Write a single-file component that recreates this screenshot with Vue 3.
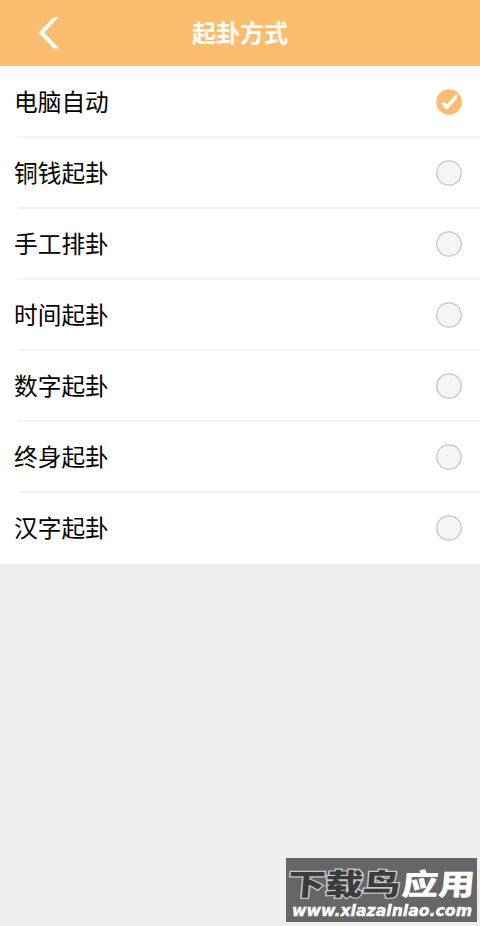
<template>
    <div class="page">
        <header class="header">
            <button class="btn-back" type="button" aria-label="返回">
                <svg width="22" height="34" viewBox="0 0 22 34">
                    <path d="M20.3 1.2H15.5L0.6 16.8L15.5 32.6H21.2L6.2 16.8Z" fill="#fff" />
                </svg>
            </button>
            <h1>起卦方式</h1>
        </header>

        <ul class="list">
            <li v-for="(item, index) in methods" :key="item" class="item" @click="selected = index">
                <span>{{ item }}</span>
                <svg v-if="selected === index" class="radio" width="26" height="26" viewBox="0 0 26 26">
                    <circle cx="13" cy="13" r="12.8" fill="#fbbe70" />
                    <path d="M5 14.2L8.6 12.9L11 15.2L19.4 6L21.2 5.2L20.8 9.6L12.4 19.6L9.8 20.4Z" fill="#fff" />
                </svg>
                <svg v-else class="radio" width="26" height="26" viewBox="0 0 26 26">
                    <circle cx="13" cy="13" r="12.2" fill="#f5f5f5" stroke="#c2c2c2" stroke-width="1.2" />
                </svg>
            </li>
        </ul>

        <svg class="watermark" width="191" height="64" viewBox="0 0 191 64">
            <rect width="191" height="64" fill="#666" />
            <g class="brand">
                <text class="brand-dark" transform="translate(1 37) skewX(-5) scale(1.27 1)">下载鸟</text>
                <text class="brand-light" transform="translate(115 37) skewX(-5) scale(1.24 1)">应用</text>
            </g>
            <text class="url" x="6" y="58" textLength="180" lengthAdjust="spacingAndGlyphs">www.xlazalnlao.com</text>
        </svg>
    </div>
</template>

<script setup>
import { ref } from 'vue';

const methods = ['电脑自动', '铜钱起卦', '手工排卦', '时间起卦', '数字起卦', '终身起卦', '汉字起卦'];
const selected = ref(0);
</script>

<style>
body {
    background-color: #eee;
}
</style>

<style scoped>
.page {
    position: relative;
    height: 926px;
    overflow: hidden;
    background-color: #eee;
    font-family: "Noto Sans CJK SC", sans-serif;
}

.header {
    display: grid;
    grid-template-columns: 80px 1fr 80px;
    align-items: center;
    height: 66px;
    background-color: #fbbe70;
}

.btn-back {
    display: flex;
    margin-left: 38px;
    padding: 0;
    border: 0;
    background: none;
    cursor: pointer;
}

h1 {
    margin: 0;
    padding-bottom: 3px;
    color: #fff;
    font-size: 24px;
    line-height: 36px;
    font-weight: bold;
    text-align: center;
}

.list {
    margin: 0;
    padding: 1px 0 0;
    list-style: none;
    background-color: #fff;
}

.item {
    display: flex;
    align-items: center;
    justify-content: space-between;
    box-sizing: border-box;
    height: 71px;
    padding: 0 18px 1px 14px;
    color: #000;
    font-size: 23.7px;
    cursor: pointer;
    background: linear-gradient(#f3f3f3, #f3f3f3) 18px 100% / 100% 2px no-repeat;
}

.item span {
    padding-bottom: 2px;
}

.item:last-child {
    background: none;
}

.radio {
    flex: none;
}

.watermark {
    position: absolute;
    left: 286px;
    top: 858px;
    overflow: visible;
}

.brand text {
    font-family: "Liberation Sans", "Noto Sans CJK SC", sans-serif;
    font-size: 29.5px;
    font-weight: 900;
    paint-order: stroke;
}

.brand-dark {
    fill: #3c3c3c;
    stroke: #c8c8c8;
    stroke-width: 2.4px;
}

.brand-light {
    fill: #fff;
}

.url {
    fill: #fff;
    font-family: "DejaVu Sans", sans-serif;
    font-size: 16.5px;
    font-weight: bold;
    font-style: italic;
    stroke: #fff;
    stroke-width: 0.4px;
}
</style>
